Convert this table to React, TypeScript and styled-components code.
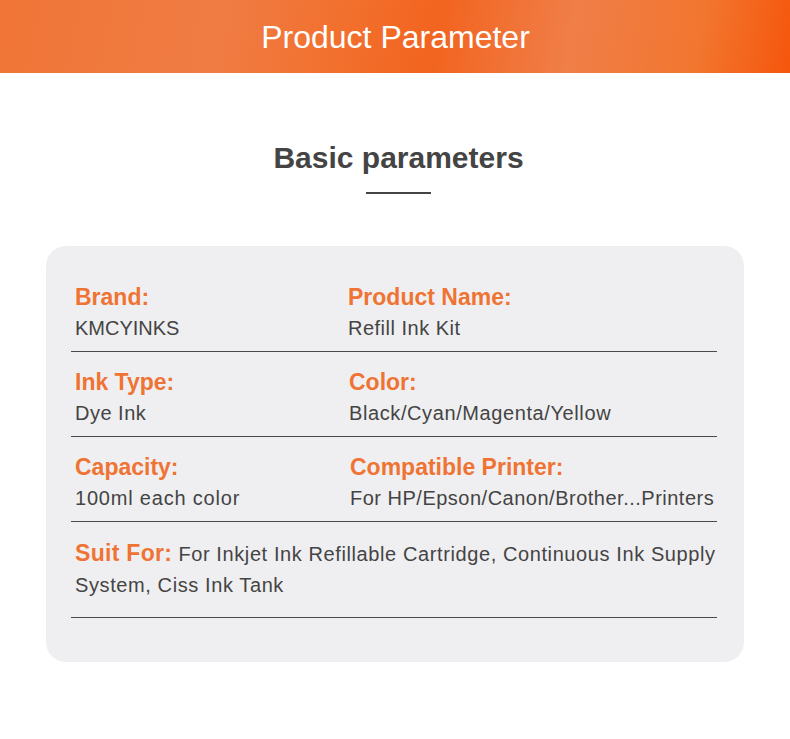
import { FC } from "react";
import styled, { createGlobalStyle } from "styled-components";

const GlobalStyle = createGlobalStyle`
  body {
    margin: 0;
    background: #ffffff;
    font-family: "Liberation Sans", Arial, sans-serif;
  }
`;

const Page = styled.div`
  width: 790px;
  height: 739px;
  background: #ffffff;
  overflow: hidden;
`;

const Banner = styled.div`
  height: 73px;
  display: flex;
  align-items: center;
  justify-content: center;
  background: linear-gradient(
    100deg,
    #f07536 0%,
    #f07c44 28%,
    #f2712f 42%,
    #f2641f 55%,
    #f07e48 72%,
    #f2762f 88%,
    #f5560c 100%
  );
`;

const BannerTitle = styled.h1`
  margin: 0;
  color: #ffffff;
  font-size: 32px;
  font-weight: 400;
  line-height: 36px;
  padding: 1px 0 0 1px;
`;

const Heading = styled.div`
  display: flex;
  flex-direction: column;
  align-items: center;
  margin-top: 67px;
  padding-left: 7px;
`;

const HeadingTitle = styled.h2`
  margin: 0;
  color: #444444;
  font-size: 30px;
  font-weight: 700;
  line-height: 36px;
`;

const Underline = styled.div`
  width: 65px;
  height: 2px;
  margin-top: 16px;
  background: #444444;
`;

const Card = styled.div`
  margin: 52px 46px 0;
  height: 416px;
  box-sizing: border-box;
  padding: 21px 27px 0 25px;
  background: #efeff1;
  border-radius: 20px;
`;

const Row = styled.div`
  display: grid;
  grid-template-columns: 273px 1fr;
  padding: 14px 0 7px 4px;
  border-bottom: 1px solid #4a4a4a;
`;

const Cell = styled.div`
  display: flex;
  flex-direction: column;
`;

const Label = styled.span<{ $shift?: number }>`
  color: #ef7434;
  font-size: 23px;
  font-weight: 700;
  line-height: 32px;
  margin-left: ${({ $shift }) => $shift ?? 0}px;
`;

const Value = styled.span<{ $spacing?: number; $shift?: number }>`
  color: #444444;
  font-size: 20px;
  line-height: 31px;
  white-space: nowrap;
  letter-spacing: ${({ $spacing }) => $spacing ?? 0.5}px;
  margin-left: ${({ $shift }) => $shift ?? 0}px;
`;

const WideRow = styled.div`
  padding: 16px 0 16px 4px;
  border-bottom: 1px solid #4a4a4a;
  color: #444444;
  font-size: 20px;
  line-height: 31px;
  letter-spacing: 0.6px;
`;

const InlineLabel = styled.span`
  color: #ef7434;
  font-size: 23px;
  font-weight: 700;
  letter-spacing: 0.3px;
`;

const params = [
  [
    { label: "Brand:", value: "KMCYINKS", spacing: 0 },
    { label: "Product Name:", value: "Refill Ink Kit" },
  ],
  [
    { label: "Ink Type:", value: "Dye Ink" },
    { label: "Color:", value: "Black/Cyan/Magenta/Yellow", shift: 1, spacing: 0.6 },
  ],
  [
    { label: "Capacity:", value: "100ml each color", spacing: 0.8 },
    {
      label: "Compatible Printer:",
      value: "For HP/Epson/Canon/Brother...Printers",
      shift: 2,
    },
  ],
];

const App: FC = () => {
  return (
    <Page>
      <GlobalStyle />
      <Banner>
        <BannerTitle>Product Parameter</BannerTitle>
      </Banner>
      <Heading>
        <HeadingTitle>Basic parameters</HeadingTitle>
        <Underline />
      </Heading>
      <Card>
        {params.map((row, i) => (
          <Row key={i}>
            {row.map((item) => (
              <Cell key={item.label}>
                <Label $shift={item.shift}>{item.label}</Label>
                <Value $spacing={item.spacing} $shift={item.shift}>
                  {item.value}
                </Value>
              </Cell>
            ))}
          </Row>
        ))}
        <WideRow>
          <InlineLabel>Suit For:</InlineLabel> For Inkjet Ink Refillable
          Cartridge, Continuous Ink Supply System, Ciss Ink Tank
        </WideRow>
      </Card>
    </Page>
  );
};

export default App;
